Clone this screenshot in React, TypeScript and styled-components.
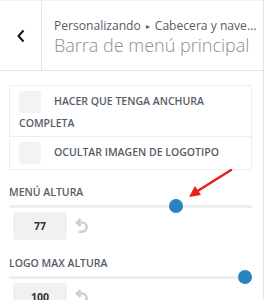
import React from "react";
import styled, { createGlobalStyle } from "styled-components";

const Global = createGlobalStyle`
  html, body { margin: 0; padding: 0; background: #fff; }
  body { font-family: "Open Sans", "Noto Sans", sans-serif; }
  * { box-sizing: border-box; }
`;

const Panel = styled.div`
  position: relative;
  width: 264px;
  height: 300px;
  overflow: hidden;
  background: #fff;
  border-right: 1px solid #e2e4e7;
`;

const Header = styled.div`
  display: flex;
  height: 71px;
  border-top: 1px solid #f1f1f1;
  border-bottom: 1px solid #e6e6e6;
`;

const BackButton = styled.div`
  width: 42px;
  flex: none;
  display: flex;
  align-items: center;
  justify-content: center;
  border-right: 1px solid #e6e6e6;
  color: #111;
`;

const TitleBlock = styled.div`
  flex: 1;
  min-width: 0;
  padding: 16px 5px 0 12px;
`;

const Crumbs = styled.div`
  font-size: 12.1px;
  line-height: 17px;
  color: #555d66;
  white-space: nowrap;
  overflow: hidden;
  text-overflow: ellipsis;
`;

const Sep = styled.span`
  font-size: 8px;
  margin: 0 5px;
  vertical-align: 1px;
`;

const Title = styled.div`
  margin-top: -1px;
  font-size: 18px;
  font-weight: 300;
  line-height: 25px;
  color: #8a9096;
  white-space: nowrap;
`;

const Body = styled.div`
  padding: 14px 11px 0 9px;
`;

const CheckGroup = styled.div`
  border: 1px solid #eeeeee;
`;

const CheckRow = styled.label<{ $last?: boolean }>`
  display: block;
  padding: 5px 9px ${(p) => (p.$last ? "5px" : "2px")};
  border-bottom: ${(p) => (p.$last ? "none" : "1px solid #eeeeee")};
  font-size: 10.5px;
  font-weight: 600;
  line-height: 21px;
  color: #555d66;
  text-transform: uppercase;
`;

const Box = styled.span`
  display: inline-block;
  width: 22px;
  height: 22px;
  margin-right: 13px;
  vertical-align: middle;
  background: #f3f3f3;
  border-radius: 3px;
`;

const Control = styled.div<{ $first?: boolean }>`
  margin-top: ${(p) => (p.$first ? "15px" : "16px")};
`;

const Label = styled.div`
  font-size: 10.5px;
  font-weight: 600;
  line-height: 14px;
  color: #555d66;
  text-transform: uppercase;
`;

const Track = styled.div`
  position: relative;
  margin-top: 1px;
  height: 12px;
  display: flex;
  align-items: center;
`;

const Rail = styled.div`
  width: 100%;
  height: 3px;
  border-radius: 2px;
  background: #eeeeee;
`;

const Thumb = styled.div`
  position: absolute;
  top: -1px;
  width: 14px;
  height: 14px;
  border-radius: 50%;
  background: #2b83bd;
`;

const ValueRow = styled.div`
  display: flex;
  align-items: center;
  gap: 6px;
  padding-left: 4px;
`;

const ValueBox = styled.div`
  width: 54px;
  height: 28px;
  display: flex;
  align-items: center;
  justify-content: center;
  background: #f1f1f1;
  border-radius: 3px;
  font-size: 10.5px;
  font-weight: 700;
  color: #333;
`;

const Arrow = styled.svg`
  position: absolute;
  left: 180px;
  top: 164px;
`;

const ResetIcon = () => (
  <svg width="17" height="17" viewBox="0 0 17 17" fill="none">
    <path d="M5.5 4.5 H9 A4.6 4.6 0 0 1 9 13.7 H5.5" stroke="#cfcfcf" strokeWidth="2.6" />
    <path d="M7.6 1 L3.8 4.5 L7.6 8" stroke="#cfcfcf" strokeWidth="2.4" fill="none" />
  </svg>
);

const Chevron = () => (
  <svg width="10" height="14" viewBox="0 0 10 14">
    <path d="M7.5 1.5 L2.5 7 L7.5 12.5" stroke="#111" strokeWidth="2" fill="none" />
  </svg>
);

const Slider = ({ label, value, min, max, first }: { label: string; value: number; min: number; max: number; first?: boolean }) => {
  const pct = (value - min) / (max - min);
  return (
    <Control $first={first}>
      <Label>{label}</Label>
      <Track>
        <Rail />
        <Thumb style={{ left: `calc(${pct} * (100% - 14px))` }} />
      </Track>
      <ValueRow>
        <ValueBox>{value}</ValueBox>
        <ResetIcon />
      </ValueRow>
    </Control>
  );
};

export default function App() {
  return (
    <>
      <Global />
      <Panel>
        <Header>
          <BackButton>
            <Chevron />
          </BackButton>
          <TitleBlock>
            <Crumbs>
              Personalizando<Sep>▸</Sep>Cabecera y navegación
            </Crumbs>
            <Title>Barra de menú principal</Title>
          </TitleBlock>
        </Header>
        <Body>
          <CheckGroup>
            <CheckRow>
              <Box />
              Hacer que tenga anchura completa
            </CheckRow>
            <CheckRow $last>
              <Box />
              Ocultar imagen de logotipo
            </CheckRow>
          </CheckGroup>
          <Slider first label="Menú altura" value={77} min={0} max={110} />
          <Slider label="Logo max altura" value={100} min={0} max={100} />
        </Body>
        <Arrow width="60" height="40" viewBox="0 0 60 40">
          <line x1="51" y1="6" x2="16" y2="28" stroke="#e8211d" strokeWidth="2.6" strokeLinecap="round" />
          <polygon points="9,33 15,22 21,31" fill="#e8211d" />
        </Arrow>
      </Panel>
    </>
  );
}
